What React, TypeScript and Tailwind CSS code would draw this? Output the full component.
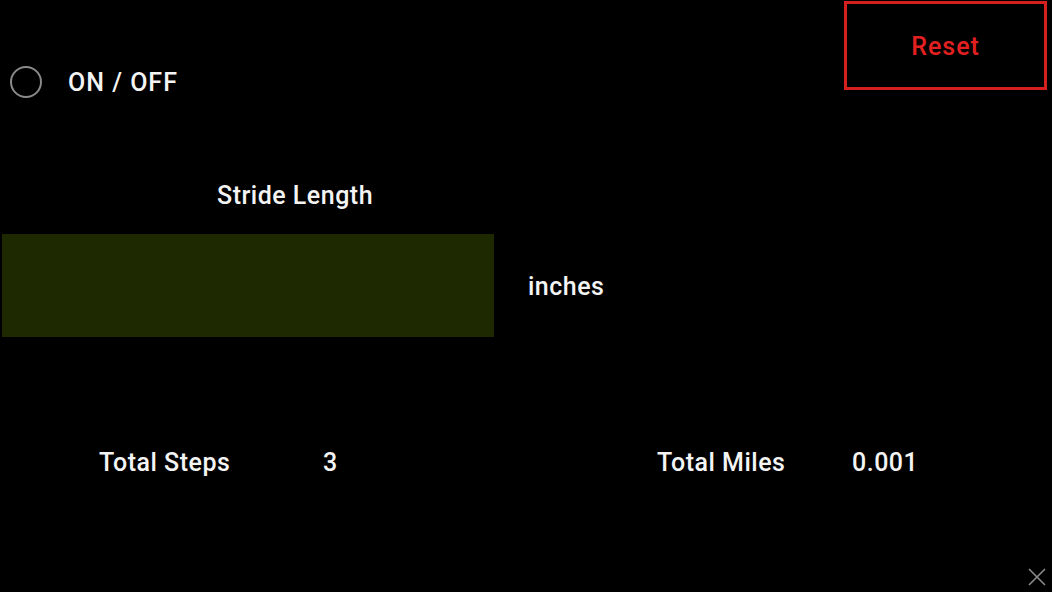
import React from "react";

export default function App() {
  return (
    <div
      className="relative w-[1052px] h-[592px] bg-black text-[#f4f4f4] overflow-hidden"
      style={{ fontFamily: "Roboto, 'Liberation Sans', sans-serif" }}
    >
      <div className="flex justify-between items-start h-[179px]">
        <div className="flex items-center pt-[65px] pl-[10px]">
          <div className="w-[32px] h-[32px] rounded-full border-2 border-[#8a8a8a]" />
          <span className="ml-[26px] text-[25px] font-medium leading-[32px] tracking-[1px] pt-[2px]">ON / OFF</span>
        </div>
        <button className="mt-[1px] mr-[5px] w-[203px] h-[89px] border-[3px] border-[#d61f1f] text-[#e32020] text-[25px] font-medium tracking-[1px] flex items-center justify-center pt-[3px]">
          Reset
        </button>
      </div>
      <div className="pl-[217px] h-[32px] text-[25px] font-medium leading-[32px] tracking-[0.5px] pt-[1px]">Stride Length</div>
      <div className="flex items-center mt-[23px]">
        <div className="ml-[2px] w-[492px] h-[103px] bg-[#1f2901]" />
        <span className="ml-[34px] text-[25px] font-medium leading-[32px] tracking-[0.5px] pt-[2px]">inches</span>
      </div>
      <div className="flex items-center mt-[109px] h-[32px] text-[25px] font-medium leading-[32px] tracking-[0.5px] pt-[1px]">
        <span className="pl-[99px] w-[323px]">Total Steps</span>
        <span className="w-[334px]">3</span>
        <span className="w-[195px]">Total Miles</span>
        <span>0.001</span>
      </div>
      <svg
        className="absolute right-[6px] bottom-[6px]"
        width="18"
        height="18"
        viewBox="0 0 18 18"
        fill="none"
        stroke="#8c8c8c"
        strokeWidth="1.6"
      >
        <path d="M1 1 L17 17 M17 1 L1 17" />
      </svg>
    </div>
  );
}
